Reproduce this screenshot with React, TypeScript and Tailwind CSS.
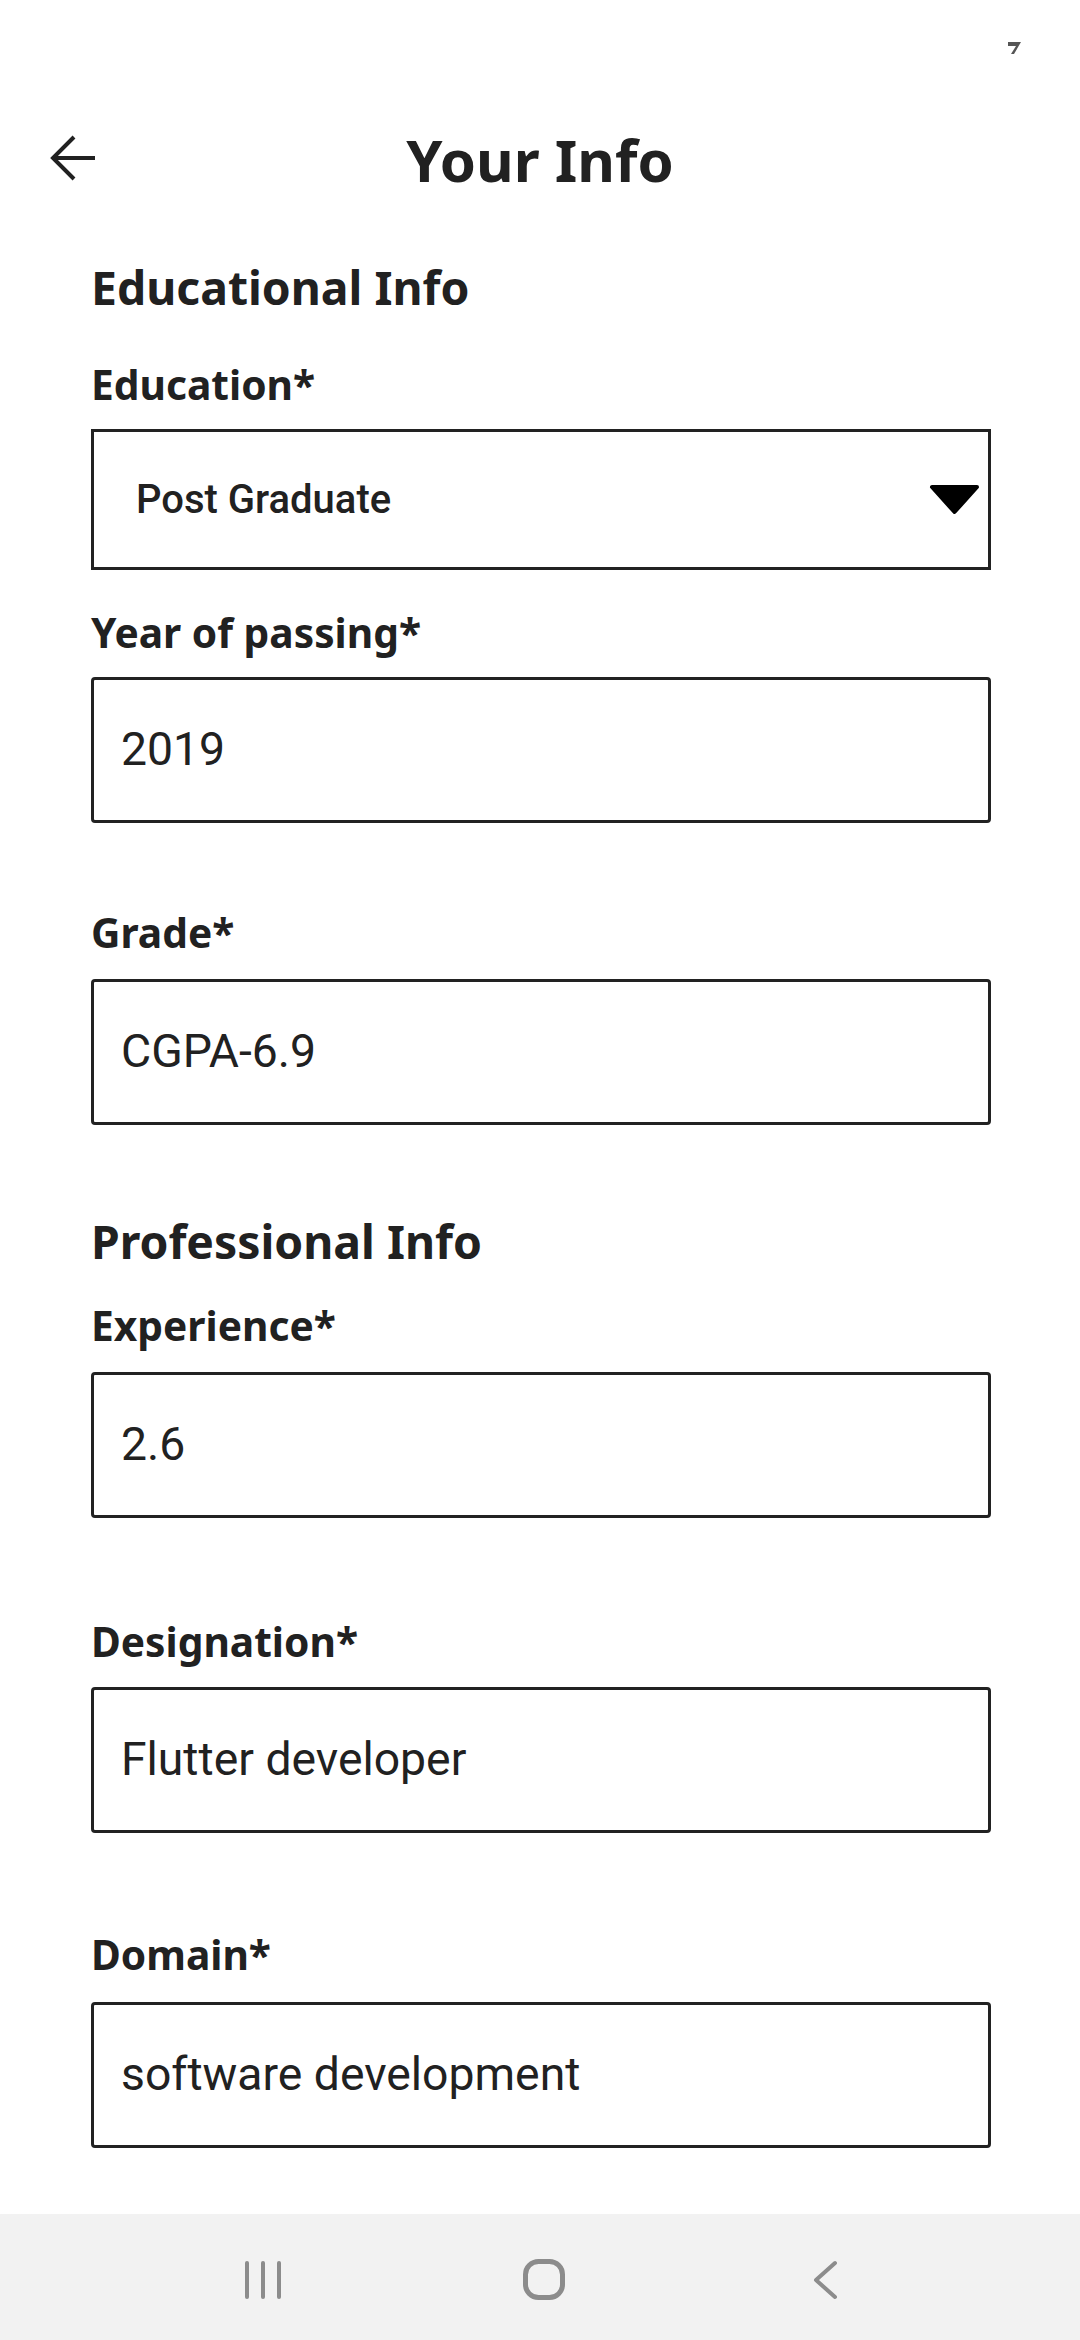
const heading = "font-['Noto_Sans',sans-serif] font-bold text-[#212121]";

function Label({ text, className }: { text: string; className: string }) {
  return <div className={`${heading} text-[40.7px] leading-[54px] ${className}`}>{text}</div>;
}

function Field({ value, className }: { value: string; className: string }) {
  return (
    <div
      className={`h-[146px] border-[3px] border-[#222222] rounded-[4px] flex items-center pl-[27px] font-['Roboto',sans-serif] text-[46.3px] text-[#212121] ${className}`}
    >
      {value}
    </div>
  );
}

export default function App() {
  return (
    <div className="w-[1080px] h-[2340px] bg-white flex flex-col overflow-hidden">
      {/* status bar */}
      <div className="h-[100px] flex justify-end pt-[42px] pr-[59px]">
        <svg width="13" height="12" viewBox="0 0 13 12">
          <polygon points="0,0 13,0 6,12 3,12 8,4 0,4" fill="#555555" />
        </svg>
      </div>

      {/* app bar */}
      <div className="h-[116px] flex items-center">
        <div className="w-[97px] pl-[49px] flex items-center">
          <svg width="48" height="48" viewBox="0 0 48 48" fill="none" stroke="#212121" strokeWidth="4">
            <path d="M5 24 H46" />
            <path d="M25 3 L4 24 L25 45" />
          </svg>
        </div>
        <div className={`${heading} flex-1 text-center text-[58px] leading-[79px] pt-[3px]`}>Your Info</div>
        <div className="w-[97px]" />
      </div>

      <div className="pl-[91px] pr-[89px] flex flex-col">
        <div className={`${heading} text-[46.3px] leading-[65px] mt-[39px]`}>Educational Info</div>

        <Label text="Education*" className="mt-[37px]" />
        <div className="mt-[18px] h-[141px] border-[3px] border-[#222222] flex items-center justify-between pl-[42px] pr-[8px]">
          <span className="font-['Roboto',sans-serif] font-medium text-[40px] text-[#212121]">Post Graduate</span>
          <svg width="51" height="31" viewBox="0 0 51 31">
            <polygon points="3,3 48,3 25.5,28" fill="#000000" stroke="#000000" strokeWidth="4" strokeLinejoin="round" />
          </svg>
        </div>

        <Label text="Year of passing*" className="mt-[35px]" />
        <Field value="2019" className="mt-[18px]" />

        <Label text="Grade*" className="mt-[82px]" />
        <Field value="CGPA-6.9" className="mt-[20px]" />

        <div className={`${heading} text-[46.3px] leading-[65px] mt-[84px]`}>Professional Info</div>

        <Label text="Experience*" className="mt-[24px]" />
        <Field value="2.6" className="mt-[20px]" />

        <Label text="Designation*" className="mt-[96px]" />
        <Field value="Flutter developer" className="mt-[19px]" />

        <Label text="Domain*" className="mt-[94px]" />
        <Field value="software development" className="mt-[21px]" />
      </div>

      <div className="flex-1" />

      {/* navigation bar */}
      <div className="h-[126px] bg-[#f2f2f2] flex items-center pl-[233px] gap-[221px] pt-[6px]">
        <svg width="60" height="60" viewBox="0 0 60 60" fill="none" stroke="#8c8c8c" strokeWidth="4" strokeLinecap="round">
          <path d="M14 13 V47" />
          <path d="M30 13 V47" />
          <path d="M46 13 V47" />
        </svg>
        <svg width="60" height="60" viewBox="0 0 60 60" fill="none" stroke="#8c8c8c" strokeWidth="5">
          <rect x="11.5" y="11.5" width="37" height="36" rx="13" />
        </svg>
        <svg width="60" height="60" viewBox="0 0 60 60" fill="none" stroke="#8c8c8c" strokeWidth="4" strokeLinecap="round" strokeLinejoin="round">
          <polyline points="40,13 21,30 40,47" />
        </svg>
      </div>
    </div>
  );
}
